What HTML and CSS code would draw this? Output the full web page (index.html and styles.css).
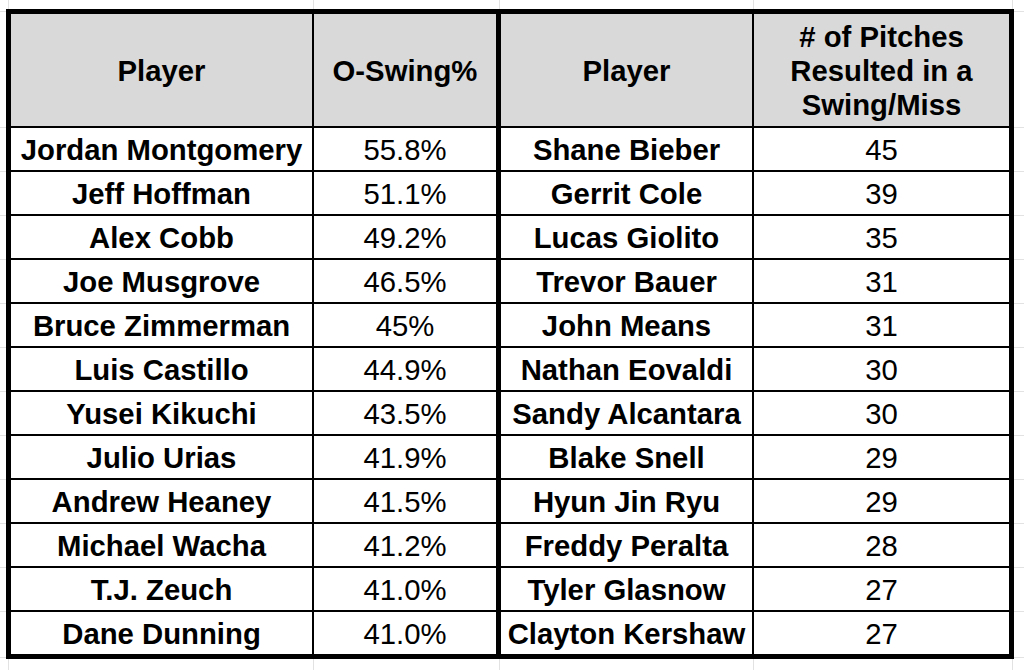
FILE: index.html
```html
<!DOCTYPE html>
<html lang="en">
<head>
<meta charset="utf-8">
<title>O-Swing% and Swing/Miss leaders</title>
<link rel="stylesheet" href="styles.css">
</head>
<body>
<div class="sheet">
  <div class="board">
    <div class="cell head">Player</div>
    <div class="cell head mid">O-Swing%</div>
    <div class="cell head">Player</div>
    <div class="cell head">#&nbsp;of Pitches<br>Resulted in a<br>Swing/Miss</div>

    <div class="cell name">Jordan Montgomery</div><div class="cell num mid">55.8%</div><div class="cell name">Shane Bieber</div><div class="cell num">45</div>
    <div class="cell name">Jeff Hoffman</div><div class="cell num mid">51.1%</div><div class="cell name">Gerrit Cole</div><div class="cell num">39</div>
    <div class="cell name">Alex Cobb</div><div class="cell num mid">49.2%</div><div class="cell name">Lucas Giolito</div><div class="cell num">35</div>
    <div class="cell name">Joe Musgrove</div><div class="cell num mid">46.5%</div><div class="cell name">Trevor Bauer</div><div class="cell num">31</div>
    <div class="cell name">Bruce Zimmerman</div><div class="cell num mid">45%</div><div class="cell name">John Means</div><div class="cell num">31</div>
    <div class="cell name">Luis Castillo</div><div class="cell num mid">44.9%</div><div class="cell name">Nathan Eovaldi</div><div class="cell num">30</div>
    <div class="cell name">Yusei Kikuchi</div><div class="cell num mid">43.5%</div><div class="cell name">Sandy Alcantara</div><div class="cell num">30</div>
    <div class="cell name">Julio Urias</div><div class="cell num mid">41.9%</div><div class="cell name">Blake Snell</div><div class="cell num">29</div>
    <div class="cell name">Andrew Heaney</div><div class="cell num mid">41.5%</div><div class="cell name">Hyun Jin Ryu</div><div class="cell num">29</div>
    <div class="cell name">Michael Wacha</div><div class="cell num mid">41.2%</div><div class="cell name">Freddy Peralta</div><div class="cell num">28</div>
    <div class="cell name">T.J. Zeuch</div><div class="cell num mid">41.0%</div><div class="cell name">Tyler Glasnow</div><div class="cell num">27</div>
    <div class="cell name">Dane Dunning</div><div class="cell num mid">41.0%</div><div class="cell name">Clayton Kershaw</div><div class="cell num">27</div>
  </div>
</div>
</body>
</html>
```

FILE: styles.css
```css
html, body {
  margin: 0;
  padding: 0;
}

body {
  width: 1024px;
  height: 670px;
  overflow: hidden;
  font-family: "Liberation Sans", Arial, sans-serif;
  color: #000;
  background-color: #fff;
  /* faint spreadsheet gridlines peeking around the table */
  background-image:
    linear-gradient(#e2e2e2, #e2e2e2),
    linear-gradient(#e2e2e2, #e2e2e2),
    linear-gradient(#e2e2e2, #e2e2e2),
    linear-gradient(#e2e2e2, #e2e2e2),
    linear-gradient(#e2e2e2, #e2e2e2),
    linear-gradient(#e2e2e2, #e2e2e2),
    repeating-linear-gradient(to bottom, #e2e2e2 0 1px, transparent 1px 44px),
    linear-gradient(#e2e2e2, #e2e2e2);
  background-repeat: no-repeat;
  background-position:
    8px 0, 313px 0, 499px 0, 753px 0, 1012px 0,
    0 11px,
    0 127px,
    0 657px;
  background-size:
    1px 100%, 1px 100%, 1px 100%, 1px 100%, 1px 100%,
    100% 1px,
    100% 490px,
    100% 1px;
}

.sheet {
  padding: 9px 0 0 6px;
}

.board {
  display: grid;
  grid-template-columns: 301px 185px 251px 255px;
  grid-template-rows: 112px repeat(12, 42px);
  gap: 2px;
  padding: 5px;
  width: 998px;
  background: #000;
}

.cell {
  display: flex;
  align-items: center;
  justify-content: center;
  text-align: center;
  padding-top: 2px;
  box-sizing: border-box;
  background: #fff;
  font-size: 29.3px;
  line-height: 34px;
  white-space: nowrap;
}

.cell.mid {
  margin-right: 3px;
}

.head {
  background: #d9d9d9;
  font-weight: bold;
}

.name {
  font-weight: bold;
}

.num {
  font-weight: normal;
}
```
